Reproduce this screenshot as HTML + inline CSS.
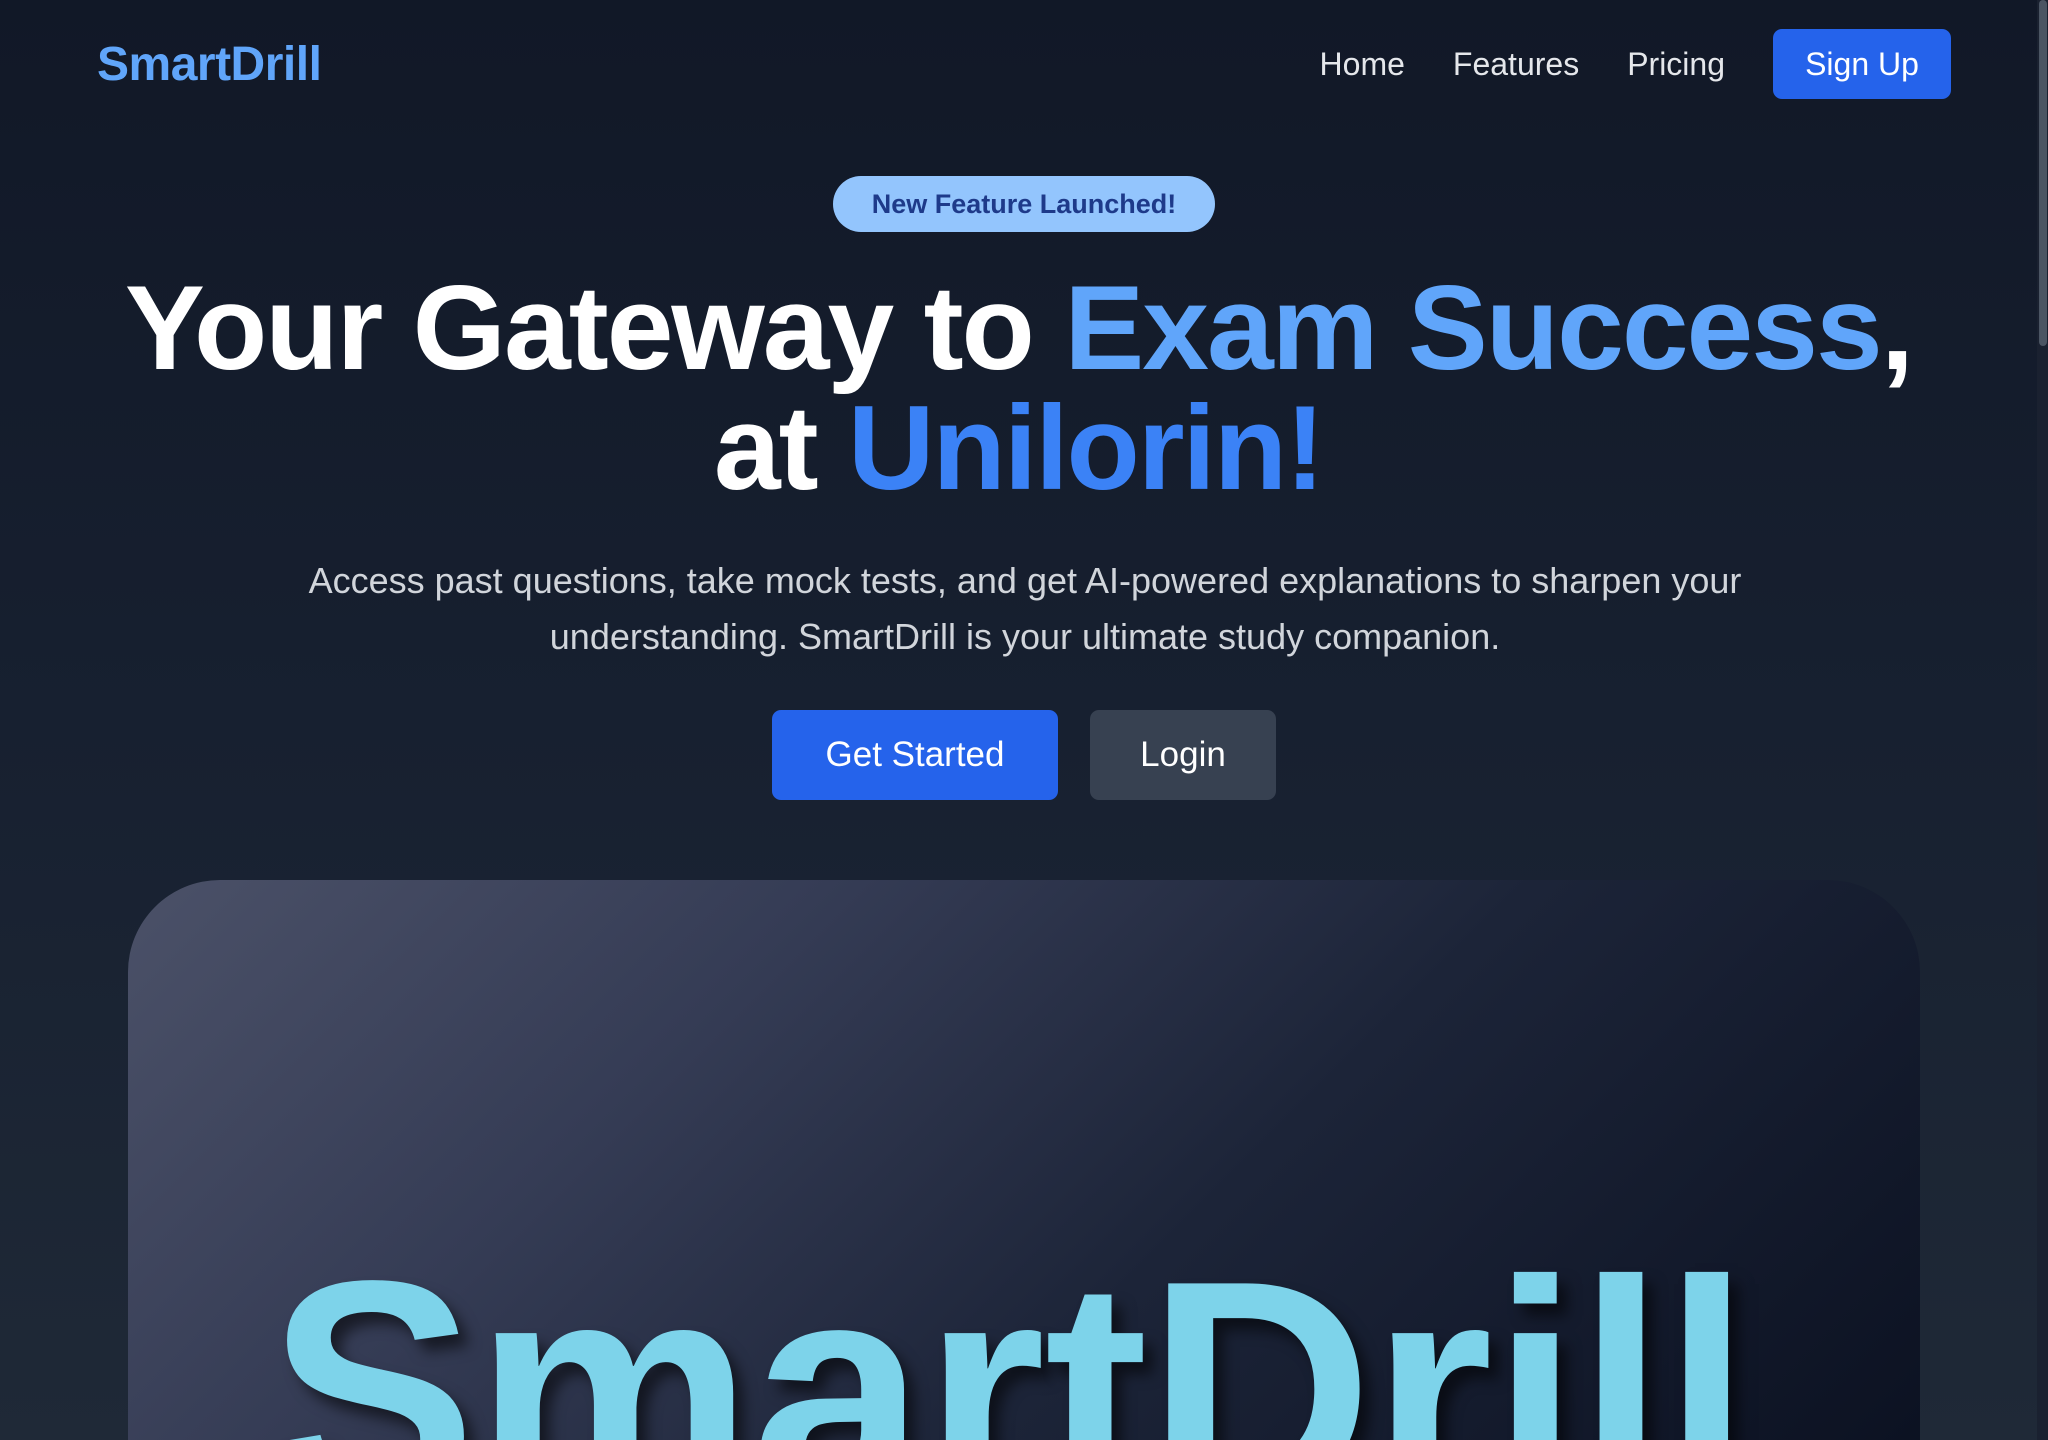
<!DOCTYPE html>
<html><head><meta charset="utf-8"><style>
*{margin:0;padding:0;box-sizing:border-box}
html,body{width:2048px;height:1440px;overflow:hidden}
body{background:linear-gradient(180deg,#111827 0%,#172030 50%,#1f2937 100%);font-family:"Liberation Sans",sans-serif;color:#fff;position:relative}
.logo{position:absolute;left:97px;top:37px;font-size:48px;font-weight:700;color:#60a5fa;letter-spacing:-0.5px}
.nav{position:absolute;top:29px;right:97px;display:flex;align-items:center}
.nav a{color:#e5e7eb;font-size:32px;margin-right:48px;text-decoration:none}
.btn-sign{background:#2563eb;color:#fff;font-size:32px;width:178px;height:70px;border-radius:9px;display:flex;align-items:center;justify-content:center}
.scroll{position:absolute;right:0;top:0;width:11px;height:1440px;background:#1a2130}
.scroll div{width:8px;margin-left:2px;height:346px;background:#4b5563;border-radius:4px}
.badge{position:absolute;left:833px;top:176px;width:382px;height:56px;border-radius:28px;background:#93c5fd;color:#1e3a8a;font-size:27px;font-weight:600;display:flex;align-items:center;justify-content:center}
h1{position:absolute;left:0;width:2037px;top:268px;text-align:center;font-size:120px;font-weight:800;line-height:120px;letter-spacing:-2px}
.b1{color:#60a5fa}.b2{color:#3b82f6}
p{position:absolute;left:280px;width:1490px;top:553px;text-align:center;font-size:36px;line-height:56px;color:#d1d5db}
.gs{position:absolute;left:772px;top:710px;width:286px;height:90px;background:#2563eb;border-radius:9px;font-size:35px;display:flex;align-items:center;justify-content:center}
.lg{position:absolute;left:1090px;top:710px;width:186px;height:90px;background:#374151;border-radius:9px;font-size:35px;display:flex;align-items:center;justify-content:center}
.card{position:absolute;left:128px;top:880px;width:1792px;height:560px;border-radius:92px 92px 0 0;overflow:hidden;background:linear-gradient(135deg,#4b5168 0%,#353c55 30%,#1c2438 60%,#0c1222 100%)}
.big{position:absolute;left:140px;top:355px;font-size:312px;font-weight:700;color:#7dd3ea;letter-spacing:-1px;line-height:1;text-shadow:10px 12px 14px rgba(0,0,0,.55)}
</style></head><body>
<div class="logo">SmartDrill</div>
<div class="nav"><a>Home</a><a>Features</a><a>Pricing</a><div class="btn-sign">Sign Up</div></div>
<div class="badge">New Feature Launched!</div>
<h1>Your Gateway to <span class="b1">Exam Success</span>,<br>at <span class="b2">Unilorin!</span></h1>
<p>Access past questions, take mock tests, and get AI-powered explanations to sharpen your understanding. SmartDrill is your ultimate study companion.</p>
<div class="gs">Get Started</div>
<div class="lg">Login</div>
<div class="card"><div class="big">SmartDrill</div></div>
<div class="scroll"><div></div></div>
</body></html>
